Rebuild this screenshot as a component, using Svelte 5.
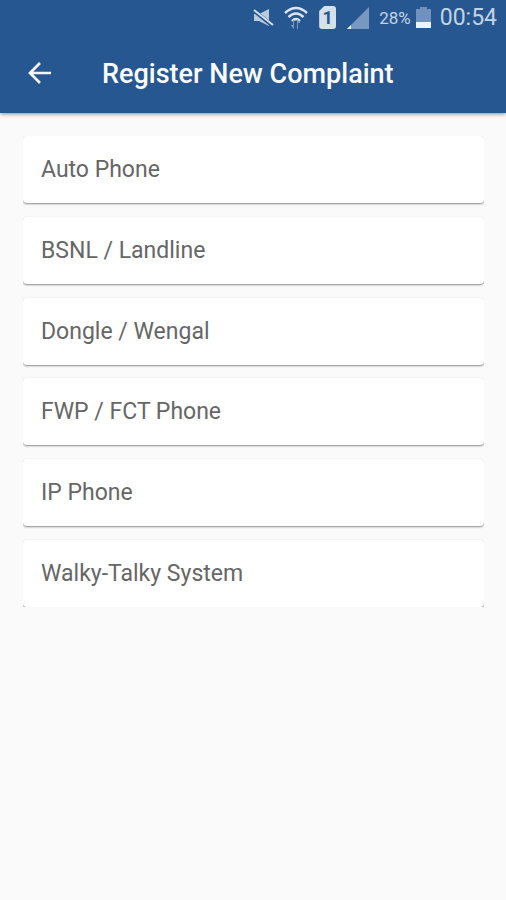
<script lang="ts">
	const title = 'Register New Complaint';

	const categories = [
		'Auto Phone',
		'BSNL / Landline',
		'Dongle / Wengal',
		'FWP / FCT Phone',
		'IP Phone',
		'Walky-Talky System'
	];
</script>

<div class="screen">
	<header>
		<div class="status">
			<svg class="mute" width="22" height="20" viewBox="0 0 22 20">
				<path d="M1 6h5l10-5v17L6 13H1z" fill="#b8cae0" />
				<path d="M0 2l20 16" stroke="#275790" stroke-width="4" />
				<path d="M1 2l19 15" stroke="#d3deeb" stroke-width="2" />
			</svg>
			<svg class="wifi" width="24" height="24" viewBox="0 0 24 24">
				<g fill="none" stroke="#dce6f2" stroke-width="2.4">
					<path d="M1 7Q12-3 23 7" />
					<path d="M4.5 11Q12 4 19.5 11" />
					<path d="M8 15Q12 11 16 15" />
				</g>
				<path d="M9 14v5H6.500l3.500 4V14zM14 23v-6h2.500L13 13v10z" fill="#7898bf" />
			</svg>
			<span class="sim">1</span>
			<svg class="signal" width="24" height="22" viewBox="0 0 24 22">
				<path d="M23 0v22H1z" fill="#7898bf" />
				<path d="M5 18v4H1z" fill="#e8eff8" />
			</svg>
			<span class="percent">28%</span>
			<svg class="battery" width="15" height="21" viewBox="0 0 15 21">
				<path d="M4 0h7v2h4v19H0V2h4z" fill="#6f91bb" />
				<path d="M0 15h15v6H0z" fill="#edf3fa" />
			</svg>
			<span class="clock">00:54</span>
		</div>
		<div class="toolbar">
			<button type="button" aria-label="Back">
				<svg width="24" height="24" viewBox="0 0 24 24">
					<path d="M12 2L2 12l10 10M2 12h21" fill="none" stroke="#f3f7fc" stroke-width="2.700" />
				</svg>
			</button>
			<h1>{title}</h1>
		</div>
	</header>

	<ul>
		{#each categories as category (category)}
			<li>{category}</li>
		{/each}
	</ul>
</div>

<style>
	:global(body) {
		margin: 0;
		background: #fafafa;
	}

	.screen {
		height: 900px;
		overflow: hidden;
		background: #fafafa;
		font-family: Roboto, sans-serif;
	}

	header {
		height: 113px;
		background: #275790;
		box-shadow: 0 1px 4px rgba(0, 0, 0, 0.45);
	}

	.status {
		display: flex;
		align-items: center;
		justify-content: flex-end;
		height: 35px;
		padding-right: 9px;
		color: #c3d3e6;
	}

	.wifi {
		margin: 0 11px 0 9px;
	}

	.sim {
		width: 17px;
		height: 23px;
		border-radius: 3px;
		background: #d5e0ed;
		clip-path: polygon(5px 0, 100% 0, 100% 100%, 0 100%, 0 5px);
		color: #275790;
		font-size: 18px;
		font-weight: 700;
		line-height: 23px;
		text-align: center;
	}

	.signal {
		margin: 0 9px 0 10px;
	}

	.percent {
		font-size: 17px;
	}

	.battery {
		margin: 0 9px 0 5px;
	}

	.clock {
		font-size: 23px;
	}

	.toolbar {
		display: flex;
		align-items: center;
		height: 78px;
		padding-left: 28px;
	}

	button {
		display: flex;
		margin: 0 50px 2px 0;
		padding: 0;
		border: 0;
		background: none;
	}

	h1 {
		margin: 0;
		color: #fafcff;
		font-size: 27px;
		font-weight: 500;
		line-height: 36px;
		white-space: nowrap;
	}

	ul {
		display: flex;
		flex-direction: column;
		gap: 13.8px;
		margin: 23px 22px 0 23px;
		padding: 0;
		overflow: hidden;
		list-style: none;
	}

	li {
		box-sizing: border-box;
		height: 67px;
		padding-left: 18px;
		border-radius: 4px;
		background: #fff;
		box-shadow: 0 1px 2px rgba(0, 0, 0, 0.45);
		color: #666;
		font-size: 23px;
		line-height: 68px;
	}
</style>
